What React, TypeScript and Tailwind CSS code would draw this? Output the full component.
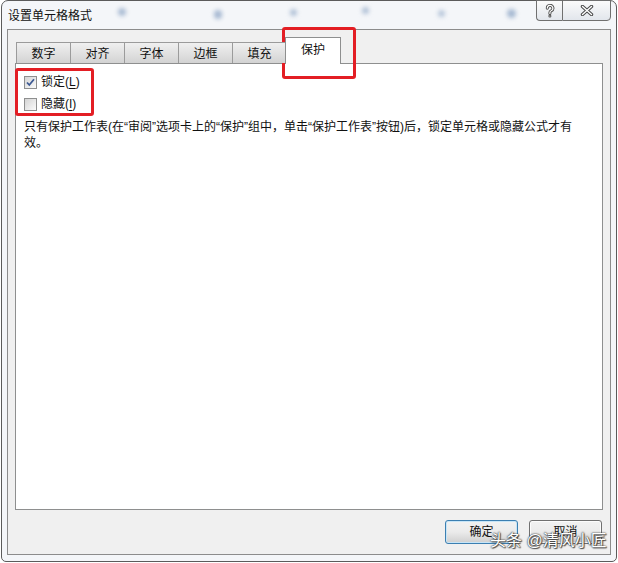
import React from "react";

const tabs = ["数字", "对齐", "字体", "边框", "填充"];

const HelpIcon = () => (
  <svg width="10" height="14" viewBox="0 0 10 14">
    <path d="M2.3 4.2a2.8 2.8 0 1 1 3.9 2.6c-.9.4-1.3.9-1.3 2v.7" fill="none" stroke="#4a4a4a" strokeWidth="3" strokeLinecap="round" />
    <circle cx="4.9" cy="12" r="1.5" fill="#4a4a4a" />
    <path d="M2.3 4.2a2.8 2.8 0 1 1 3.9 2.6c-.9.4-1.3.9-1.3 2v.7" fill="none" stroke="#fff" strokeWidth="1.2" strokeLinecap="round" />
    <circle cx="4.9" cy="12" r="0.6" fill="#fff" />
  </svg>
);

const CloseIcon = () => (
  <svg width="14" height="11" viewBox="0 0 14 11">
    <path d="M2.5 1.5l9 8M11.5 1.5l-9 8" stroke="#4a4a4a" strokeWidth="3.4" strokeLinecap="round" />
    <path d="M2.5 1.5l9 8M11.5 1.5l-9 8" stroke="#fff" strokeWidth="1.4" strokeLinecap="round" />
  </svg>
);

const Checkbox = ({ checked }: { checked?: boolean }) => (
  <span className="flex h-[13px] w-[13px] items-center justify-center border border-[#8e8f8f] bg-linear-to-br from-[#d4d4d4] to-[#fbfbfb]">
    {checked && (
      <svg width="9" height="9" viewBox="0 0 9 9">
        <path d="M1 4.5l2.3 2.5L8 1.3" fill="none" stroke="#3d5a93" strokeWidth="1.8" />
      </svg>
    )}
  </span>
);

export default function App() {
  return (
    <div className="relative h-[563px] w-[618px] bg-white font-['Liberation_Sans','Noto_Sans_CJK_SC',sans-serif] text-[12px] text-[#111]">
      {/* window */}
      <div className="ml-[1px] flex h-[562px] w-[616px] flex-col rounded-t-[7px] rounded-b-[5px] border border-[#5b5b5b] bg-[#f4f6f9]">
        {/* title bar */}
        <div className="relative flex h-[28px] items-start justify-between">
          <span className="absolute left-[116px] top-[7px] h-[8px] w-[8px] rounded-full bg-[#a9bbd3] blur-[2px]" />
          <span className="absolute left-[212px] top-[9px] h-[9px] w-[8px] rounded-full bg-[#a5b8d1] blur-[2px]" />
          <span className="absolute left-[288px] top-[8px] h-[7px] w-[7px] rounded-full bg-[#afc0d6] blur-[2px]" />
          <span className="absolute left-[360px] top-[6px] h-[7px] w-[7px] rounded-full bg-[#afc0d6] blur-[2px]" />
          <span className="absolute left-[436px] top-[9px] h-[7px] w-[7px] rounded-full bg-[#b6c6da] blur-[2px]" />
          <span className="absolute left-[505px] top-[8px] h-[9px] w-[9px] rounded-full bg-[#a5b8d1] blur-[2px]" />
          <span className="relative pl-[6px] pt-[7px] leading-[16px]">设置单元格格式</span>
          <div className="relative -mt-[1px] mr-[5px] flex">
            <div className="flex h-[21px] w-[26px] items-center justify-center rounded-bl-[4px] border border-r-0 border-[#707070] bg-linear-to-b from-[#fbfbfb] to-[#e2e6ec]">
              <HelpIcon />
            </div>
            <div className="flex h-[21px] w-[49px] items-center justify-center rounded-br-[4px] border border-[#707070] bg-linear-to-b from-[#fbfbfb] to-[#e2e6ec]">
              <CloseIcon />
            </div>
          </div>
        </div>

        {/* client area */}
        <div className="mx-[5px] mb-[6px] flex flex-1 flex-col border border-[#8c8c8c] bg-[#f0f0f0] px-[7px] pt-[8px]">
          <div className="relative z-10 flex h-[25px] items-end pl-[1px]">
            {tabs.map((t, i) => (
              <div
                key={t}
                className={`flex h-[21px] w-[55px] items-center justify-center border border-b-0 border-[#9b9b9b] bg-linear-to-b from-[#f0f0f0] to-[#d3d3d3] pt-[1px] ${i > 0 ? "-ml-[1px]" : ""}`}
              >
                {t}
              </div>
            ))}
            <div className="-mb-[1px] -ml-[2px] flex h-[27px] w-[56px] items-start justify-center border border-b-0 border-[#8e8f8f] bg-white pt-[3px]">
              保护
            </div>
          </div>

          <div className="h-[447px] border border-[#8e8f8f] bg-white pl-[8px] pt-[10px]">
            <div className="flex h-[16px] items-center gap-[4px]">
              <Checkbox checked />
              <span className="leading-[16px]">
                锁定(<span className="underline underline-offset-2">L</span>)
              </span>
            </div>
            <div className="mt-[6px] flex h-[16px] items-center gap-[4px]">
              <Checkbox />
              <span className="leading-[16px]">
                隐藏(<span className="underline underline-offset-2">I</span>)
              </span>
            </div>
            <p className="mt-[7px] w-[564px] leading-[16px]">
              只有保护工作表(在“审阅”选项卡上的“保护”组中，单击“保护工作表”按钮)后，锁定单元格或隐藏公式才有效。
            </p>
          </div>

          <div className="mt-[10px] flex justify-end gap-[11px] pr-[1px]">
            <button className="h-[24px] w-[73px] rounded-[3px] border border-[#3c7fb1] bg-linear-to-b from-[#f2f2f2] via-[#ebebeb] to-[#cfcfcf] shadow-[inset_0_0_0_1px_#c7e5f7]">
              确定
            </button>
            <button className="h-[24px] w-[73px] rounded-[3px] border border-[#707070] bg-linear-to-b from-[#f2f2f2] via-[#ebebeb] to-[#cfcfcf] shadow-[inset_0_0_0_1px_#fcfcfc]">
              取消
            </button>
          </div>
        </div>
      </div>

      {/* annotations */}
      <div className="absolute left-[282px] top-[27px] h-[52px] w-[74px] rounded-[3px] border-[3px] border-[#e31e24]" />
      <div className="absolute left-[15px] top-[68px] h-[48px] w-[79px] rounded-[3px] border-[3px] border-[#e31e24]" />

      {/* watermark */}
      <div className="absolute left-[490px] top-[531px] text-[16px] leading-[20px] text-white [text-shadow:0_0_1px_#333,0_0_2px_#333,1px_1px_1px_#555]">
        头条 @清风小匠
      </div>
    </div>
  );
}
